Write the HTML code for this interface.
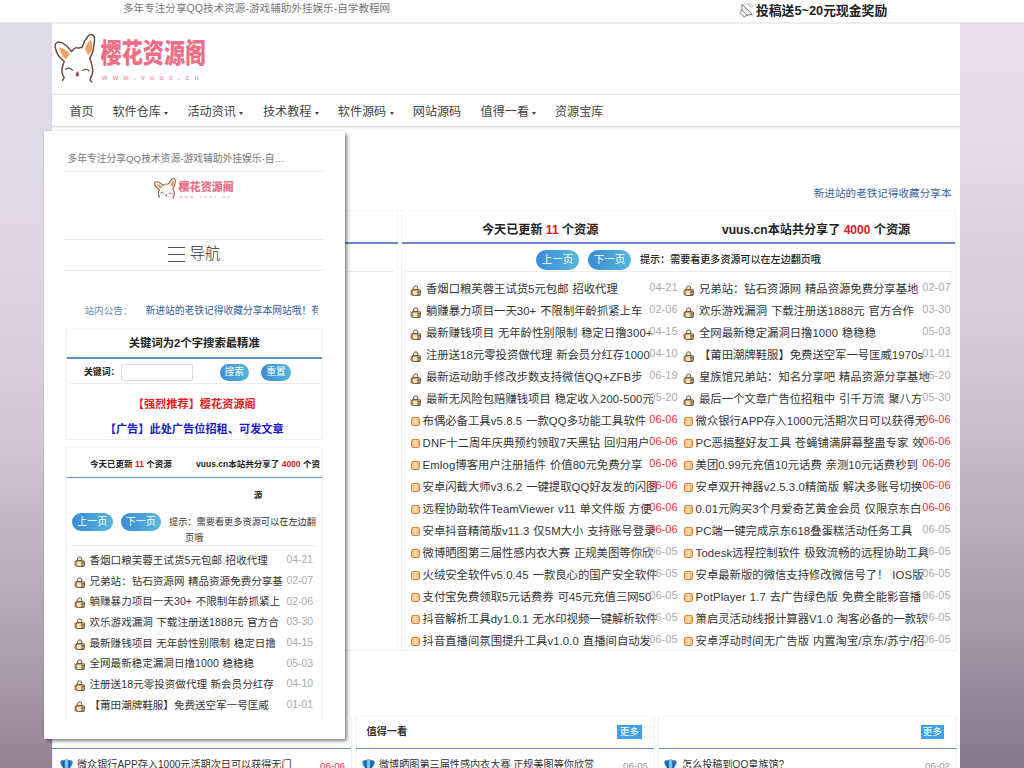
<!DOCTYPE html>
<html lang="zh-CN"><head><meta charset="utf-8"><title>樱花资源阁</title>
<style>
*{box-sizing:border-box;margin:0;padding:0}
html,body{width:1024px;height:768px;overflow:hidden}
body{position:relative;font-family:"Liberation Sans","Noto Sans CJK SC",sans-serif;color:#333;
background:linear-gradient(180deg,#dfdce9 0px,#e0dbe9 120px,#dfd6e5 250px,#dacedd 368px,#d0c3d2 450px,#c4b6c6 520px,#b8a9ba 600px,#a898aa 680px,#928294 768px)}
body:after{content:"";position:absolute;left:960px;top:23.5px;width:64px;height:745px;background:linear-gradient(180deg,#e9e0ec 0px,#e6dde9 97px,#ddd3de 207px,#d6cbd7 307px,#cabdcb 407px,#b9abbb 507px,#a597a8 607px,#95869a 677px,#86778b 745px)}
.abs,.r,.pr,.ln{position:absolute}
#top{position:absolute;left:0;top:0;width:1024px;height:23px;background:#fff;border-bottom:1px solid #ececec;z-index:5}
#top .l{position:absolute;left:123px;top:1px;font-size:10.6px;line-height:15px;color:#777;white-space:nowrap}
#top .rt{position:absolute;left:756px;top:2px;font-size:12.8px;line-height:18px;font-weight:bold;color:#222;white-space:nowrap}
#wrap{position:absolute;left:52px;top:23px;width:908px;height:745px;background:#fff;border-top:1px solid #eee}
#nav{position:absolute;left:52px;top:94px;width:908px;height:33px;border-top:1px solid #e6e6e6;border-bottom:1px solid #d8d8d8;box-shadow:0 1px 2px rgba(0,0,0,.08);background:#fff}
#nav span{position:absolute;top:10px;font-size:12.1px;line-height:15px;color:#444;white-space:nowrap}
#nav b{position:absolute;top:16.5px;width:0;height:0;border-left:2.5px solid transparent;border-right:2.5px solid transparent;border-top:3px solid #444}
.ln{height:1px;background:#ececec}
.blue{position:absolute;height:1.6px;background:#6c88c8}
.panel{position:absolute;background:#fff;border:1px solid #efefef;border-top-color:#f8f8f8}
.hd{position:absolute;font-size:12.1px;line-height:16px;font-weight:bold;color:#222;white-space:nowrap}
.hd em{font-style:normal;color:#e0191d}
.btn{position:absolute;border-radius:12px;background:linear-gradient(90deg,#3c8cd8,#55b6dc);color:#fff;text-align:center;white-space:nowrap}
.r{height:22px;white-space:nowrap;word-spacing:.7px;font-size:11.35px;line-height:22px;color:#343434}
.r .t{position:absolute;left:21px;top:0}
.r.o .t{left:17.6px}
.r .d{position:absolute;right:0.5px;top:-2px;font-size:11px;color:#aaa}
.d.red{color:#f0313a!important}
.la{letter-spacing:.12px}
.ic{position:absolute;display:block}
.r .th{left:5px;top:6.5px;width:11px;height:11px}
.r .og{left:6px;top:6.8px}
.og{width:8.6px;height:9px;border:1.3px solid #e0822f;border-radius:1.8px;background:linear-gradient(90deg,#f7bd80,#fddcb6 50%,#f6b371)}
#pop{position:absolute;left:44px;top:131px;width:300.5px;height:607.5px;background:#fff;box-shadow:2.5px 2.5px 3.5px rgba(0,0,0,.45),0 0 1px rgba(0,0,0,.35);z-index:10;overflow:hidden}
#pop .in{position:absolute;left:-44px;top:-131px;width:400px;height:900px}
.pr{left:66.5px;width:256px;height:20.5px;white-space:nowrap;word-spacing:.6px;font-size:10.56px;line-height:20.5px;color:#343434}
.pr .t{position:absolute;left:23px;top:0}
.pr .d{position:absolute;right:9.5px;top:0.3px;font-size:10.4px;color:#aaa}
.pr .th{left:7.5px;top:6px;width:11px;height:11px}
</style></head><body>
<svg width="0" height="0" style="position:absolute"><defs>
<g id="thumb">
<rect x="0.2" y="4.8" width="1.9" height="5.4" fill="#e6ad80"/>
<path d="M3.1 5 C3.6 4 3.3 2.9 3.8 1.9 C4.4 0.7 6.8 0.6 7.5 1.7 C8.1 2.7 7.5 3.9 7.9 5 Z" fill="#efe6d2" stroke="#54483a" stroke-width="0.95"/>
<path d="M2 4.9 H9.9 C10.9 4.9 10.9 6.2 10.1 6.35 C11 6.5 11 7.7 10.1 7.8 C10.9 7.95 10.8 9.1 10 9.25 C10.6 9.45 10.4 10.6 9.5 10.6 H4.2 L2 9.9 Z" fill="#f7e0b4" stroke="#4b3a20" stroke-width="0.9" stroke-linejoin="round"/>
<path d="M7.2 6.35 H10.1 M7.2 7.8 H10.1 M7.2 9.25 H9.9" stroke="#4b3a20" stroke-width="0.8"/>
</g>
<g id="gem">
<path d="M0.3 3.2 C0.3 1.5 2.2 0.6 3.6 1.6 C4.8 0 8.2 0 9.4 1.6 C10.8 0.6 12.7 1.5 12.7 3.2 C12.7 6.5 9.5 9.5 6.5 11.5 C3.5 9.5 0.3 6.5 0.3 3.2 Z" fill="#2a7cc4"/>
<path d="M5.2 1.2 C6 0.7 7 0.7 7.8 1.2 V10.5 L6.5 11.5 L5.2 10.5 Z" fill="#7fd0f2"/>
<path d="M3.6 1.6 C3 3.5 3 6 4.2 9.6 M9.4 1.6 C10 3.5 10 6 8.8 9.6" stroke="#174f8c" stroke-width="0.9" fill="none"/>
</g>
</defs></svg>

<div id="top">
 <div class="l">多年专注分享QQ技术资源-游戏辅助外挂娱乐-自学教程网</div>
 <svg class="abs" style="left:738px;top:2px" width="16" height="17" viewBox="0 0 16 17"><g fill="none" stroke="#777" stroke-width="1" stroke-linejoin="round" stroke-linecap="round"><path d="M4.3 2.5 L14.2 12.4 L9 13.2 L6.3 15 L2.2 10.8 L3.8 8 Z"/><path d="M3.8 8 L9 13.2"/><path d="M9.5 2.2 C11.2 2.4 12.6 3.6 13 5.4" stroke="#999"/><path d="M10.6 0.8 C12.6 1.2 14.2 2.8 14.6 4.8" stroke="#bbb" stroke-width="0.8"/></g></svg>
 <div class="rt">投稿送5~20元现金奖励</div>
</div>

<div id="wrap"></div>

<!-- logo -->
<svg class="abs" style="left:52px;top:30.6px" width="160" height="56" viewBox="0 0 160 56">
 <g stroke="#6e4c3e" stroke-width="1.5" stroke-linejoin="round" stroke-linecap="round">
  <path d="M10.6 49.2 C11.6 48 12.4 47 12.2 46 C10.8 45 10 42 10 38.5 C10 35.5 11.4 33 12.2 30.4 C8 27.5 4.2 21.5 3.1 16.2 C2.6 13 4.5 10.8 6.9 11.1 C9.5 11.3 12 12.6 13.5 14 C16 16.2 18 18.5 19.5 20.5 C20.8 19 22 17.4 23.5 16.9 C24.8 16.5 26 17.2 27.2 16.9 C28.4 16.6 29.2 16.4 30.1 16.2 C31.5 12 33.5 8 35.9 5.2 C37.2 3.8 39 3.2 40.3 3.8 C42 4.6 42.8 6.6 42.5 8.9 C42.2 13 41.8 16.5 41 19.8 C40.3 22.5 39.2 25.2 37.75 27.5 C38.8 29.8 39.6 32 39.9 34.4 C40.4 36.4 40.8 38.2 40.7 40.2 C40.6 42.4 40 44.2 39.2 46.1 C38.8 47.2 38.3 48 38 49 C38.6 49.8 39.2 50.4 39.9 50.8" fill="#fff"/>
 </g>
 <path d="M7.3 16.3 C11 17.2 15.5 20 18.2 23.4 C16.4 24.8 14.8 26.6 13.8 28.6 C10.5 25.5 7.8 21 7.3 16.3 Z" fill="#f0a060"/>
 <path d="M38.6 8.8 C40.2 11 40.6 14.5 40.3 17.6 C39.6 20.2 37.8 22.6 36 24.3 C35 22 33.8 19.6 33 17.6 C34.2 14 36.2 10.8 38.6 8.8 Z" fill="#f0a060"/>
 <path d="M13.7 38.4 C15 36.6 18.6 36.4 20.6 39.2 M30.5 39.7 C32.2 37.9 35.6 37.9 37 39.9" fill="none" stroke="#6e4a3c" stroke-width="1.2" stroke-linecap="round"/>
 <path d="M25.35 40.4 C26.6 41.6 27.2 43.4 26.6 44.8 C26.2 45.8 24.5 45.8 24.1 44.8 C23.5 43.4 24.1 41.6 25.35 40.4 Z" fill="#8a3a4c" stroke="#e58a9a" stroke-width="0.7" stroke-linejoin="round"/>
 <text x="0" y="0" transform="translate(48.6,32.2) scale(0.76,0.97)" font-family='Liberation Sans,Noto Sans CJK SC,sans-serif' font-weight="900" font-size="27.8" fill="#ef6d86">樱花资源阁</text>
 <text x="50" y="49.4" font-family='Liberation Sans,Noto Sans CJK SC,sans-serif' font-weight="bold" font-size="6.8" letter-spacing="5.35" fill="#f3a0ae">www.vuus.cn</text>
</svg>

<div id="nav">
 <span style="left:17.4px">首页</span>
 <span style="left:60.5px">软件仓库</span><b style="left:112px"></b>
 <span style="left:135.5px">活动资讯</span><b style="left:187px"></b>
 <span style="left:211px">技术教程</span><b style="left:262.5px"></b>
 <span style="left:285.8px">软件源码</span><b style="left:337.5px"></b>
 <span style="left:360.8px">网站源码</span>
 <span style="left:428.6px">值得一看</span><b style="left:480px"></b>
 <span style="left:503px">资源宝库</span>
</div>

<div class="abs" style="left:600px;top:185px;width:351.5px;text-align:right;font-size:10.6px;line-height:16px;color:#3c5f9f;white-space:nowrap">新进站的老铁记得收藏分享本</div>

<!-- left main panel (mostly hidden) -->
<div class="panel" style="left:52px;top:210px;width:346px;height:441px;border-right-color:#f7f7f7"></div>
<div class="blue" style="left:52px;top:242.4px;width:345.5px"></div>
<div class="ln" style="left:56px;top:271px;width:338px"></div>

<!-- right main panel -->
<div class="panel" style="left:401px;top:210px;width:554.5px;height:441px"></div>
<div class="hd" style="left:482px;top:222px">今天已更新 <em>11</em> 个资源</div>
<div class="hd" style="left:722px;top:222px">vuus.cn本站共分享了 <em>4000</em> 个资源</div>
<div class="blue" style="left:402px;top:242.4px;width:553px"></div>
<div class="btn" style="left:536px;top:250px;width:43px;height:20px;font-size:10.5px;line-height:19.5px">上一页</div>
<div class="btn" style="left:588px;top:250px;width:43px;height:20px;font-size:10.5px;line-height:19.5px">下一页</div>
<div class="abs" style="left:640px;top:252px;font-size:10.05px;line-height:16px;color:#222;font-weight:500;white-space:nowrap">提示：需要看更多资源可以在左边翻页哦</div>
<div class="ln" style="left:406px;top:271px;width:545px"></div>
<div class="ln" style="left:405px;top:271px;width:1px;height:378px;background:#fafafa"></div>
<div class="ln" style="left:951px;top:271px;width:1px;height:378px;background:#fafafa"></div>
<div class="r" style="left:405px;top:278px;width:273px"><svg class="ic th" viewBox="0 0 11 11"><use href="#thumb"/></svg><span class="t">香烟口粮芙蓉王试货<span class="la">5</span>元包邮 招收代理</span><span class="d">04-21</span></div>
<div class="r" style="left:405px;top:300px;width:273px"><svg class="ic th" viewBox="0 0 11 11"><use href="#thumb"/></svg><span class="t">躺赚暴力项目一天<span class="la">30+</span> 不限制年龄抓紧上车</span><span class="d">02-06</span></div>
<div class="r" style="left:405px;top:322px;width:273px"><svg class="ic th" viewBox="0 0 11 11"><use href="#thumb"/></svg><span class="t">最新赚钱项目 无年龄性别限制 稳定日撸<span class="la">300+</span></span><span class="d">04-15</span></div>
<div class="r" style="left:405px;top:344px;width:273px"><svg class="ic th" viewBox="0 0 11 11"><use href="#thumb"/></svg><span class="t">注册送<span class="la">18</span>元零投资做代理 新会员分红存<span class="la">1000</span></span><span class="d">04-10</span></div>
<div class="r" style="left:405px;top:366px;width:273px"><svg class="ic th" viewBox="0 0 11 11"><use href="#thumb"/></svg><span class="t">最新运动助手修改步数支持微信<span class="la">QQ+ZFB</span>步</span><span class="d">06-19</span></div>
<div class="r" style="left:405px;top:388px;width:273px"><svg class="ic th" viewBox="0 0 11 11"><use href="#thumb"/></svg><span class="t">最新无风险包赔赚钱项目 稳定收入<span class="la">200-500</span>元</span><span class="d">05-20</span></div>
<div class="r o" style="left:405px;top:410px;width:273px"><i class="ic og"></i><span class="t">布偶必备工具<span class="la">v5.8.5</span> 一款<span class="la">QQ</span>多功能工具软件</span><span class="d red">06-06</span></div>
<div class="r o" style="left:405px;top:432px;width:273px"><i class="ic og"></i><span class="t"><span class="la">DNF</span>十二周年庆典预约领取<span class="la">7</span>天黑钻 回归用户</span><span class="d red">06-06</span></div>
<div class="r o" style="left:405px;top:454px;width:273px"><i class="ic og"></i><span class="t"><span class="la">Emlog</span>博客用户注册插件 价值<span class="la">80</span>元免费分享</span><span class="d red">06-06</span></div>
<div class="r o" style="left:405px;top:476px;width:273px"><i class="ic og"></i><span class="t">安卓闪截大师<span class="la">v3.6.2</span> 一键提取<span class="la">QQ</span>好友发的闪图</span><span class="d red">06-06</span></div>
<div class="r o" style="left:405px;top:498px;width:273px"><i class="ic og"></i><span class="t">远程协助软件<span class="la">TeamViewer</span> <span class="la">v11</span> 单文件版 方便</span><span class="d red">06-06</span></div>
<div class="r o" style="left:405px;top:520px;width:273px"><i class="ic og"></i><span class="t">安卓抖音精简版<span class="la">v11.3</span> 仅<span class="la">5M</span>大小 支持账号登录</span><span class="d red">06-06</span></div>
<div class="r o" style="left:405px;top:542px;width:273px"><i class="ic og"></i><span class="t">微博晒图第三届性感内衣大赛 正规美图等你欣</span><span class="d">06-05</span></div>
<div class="r o" style="left:405px;top:564px;width:273px"><i class="ic og"></i><span class="t">火绒安全软件<span class="la">v5.0.45</span> 一款良心的国产安全软件</span><span class="d">06-05</span></div>
<div class="r o" style="left:405px;top:586px;width:273px"><i class="ic og"></i><span class="t">支付宝免费领取<span class="la">5</span>元话费券 可<span class="la">45</span>元充值三网<span class="la">50</span></span><span class="d">06-05</span></div>
<div class="r o" style="left:405px;top:608px;width:273px"><i class="ic og"></i><span class="t">抖音解析工具<span class="la">dy1.0.1</span> 无水印视频一键解析软件</span><span class="d">06-05</span></div>
<div class="r o" style="left:405px;top:630px;width:273px"><i class="ic og"></i><span class="t">抖音直播间氛围提升工具<span class="la">v1.0.0</span> 直播间自动发</span><span class="d">06-05</span></div>
<div class="r" style="left:678px;top:278px;width:273px"><svg class="ic th" viewBox="0 0 11 11"><use href="#thumb"/></svg><span class="t">兄弟站：钻石资源网 精品资源免费分享基地</span><span class="d">02-07</span></div>
<div class="r" style="left:678px;top:300px;width:273px"><svg class="ic th" viewBox="0 0 11 11"><use href="#thumb"/></svg><span class="t">欢乐游戏漏洞 下载注册送<span class="la">1888</span>元 官方合作</span><span class="d">03-30</span></div>
<div class="r" style="left:678px;top:322px;width:273px"><svg class="ic th" viewBox="0 0 11 11"><use href="#thumb"/></svg><span class="t">全网最新稳定漏洞日撸<span class="la">1000</span> 稳稳稳</span><span class="d">05-03</span></div>
<div class="r" style="left:678px;top:344px;width:273px"><svg class="ic th" viewBox="0 0 11 11"><use href="#thumb"/></svg><span class="t">【莆田潮牌鞋服】免费送空军一号匡威<span class="la">1970s</span></span><span class="d">01-01</span></div>
<div class="r" style="left:678px;top:366px;width:273px"><svg class="ic th" viewBox="0 0 11 11"><use href="#thumb"/></svg><span class="t">皇族馆兄弟站：知名分享吧 精品资源分享基地</span><span class="d">05-20</span></div>
<div class="r" style="left:678px;top:388px;width:273px"><svg class="ic th" viewBox="0 0 11 11"><use href="#thumb"/></svg><span class="t">最后一个文章广告位招租中 引千万流 聚八方</span><span class="d">05-30</span></div>
<div class="r o" style="left:678px;top:410px;width:273px"><i class="ic og"></i><span class="t">微众银行<span class="la">APP</span>存入<span class="la">1000</span>元活期次日可以获得无</span><span class="d red">06-06</span></div>
<div class="r o" style="left:678px;top:432px;width:273px"><i class="ic og"></i><span class="t"><span class="la">PC</span>恶搞整好友工具 苍蝇铺满屏幕整蛊专家 效</span><span class="d red">06-06</span></div>
<div class="r o" style="left:678px;top:454px;width:273px"><i class="ic og"></i><span class="t">美团<span class="la">0.99</span>元充值<span class="la">10</span>元话费 亲测<span class="la">10</span>元话费秒到</span><span class="d red">06-06</span></div>
<div class="r o" style="left:678px;top:476px;width:273px"><i class="ic og"></i><span class="t">安卓双开神器<span class="la">v2.5.3.0</span>精简版 解决多账号切换</span><span class="d red">06-06</span></div>
<div class="r o" style="left:678px;top:498px;width:273px"><i class="ic og"></i><span class="t"><span class="la">0.01</span>元购买<span class="la">3</span>个月爱奇艺黄金会员 仅限京东白</span><span class="d red">06-06</span></div>
<div class="r o" style="left:678px;top:520px;width:273px"><i class="ic og"></i><span class="t"><span class="la">PC</span>端一键完成京东<span class="la">618</span>叠蛋糕活动任务工具</span><span class="d">06-05</span></div>
<div class="r o" style="left:678px;top:542px;width:273px"><i class="ic og"></i><span class="t"><span class="la">Todesk</span>远程控制软件 极致流畅的远程协助工具</span><span class="d">06-05</span></div>
<div class="r o" style="left:678px;top:564px;width:273px"><i class="ic og"></i><span class="t">安卓最新版的微信支持修改微信号了！ <span class="la">IOS</span>版</span><span class="d">06-05</span></div>
<div class="r o" style="left:678px;top:586px;width:273px"><i class="ic og"></i><span class="t"><span class="la">PotPlayer</span> <span class="la">1.7</span> 去广告绿色版 免费全能影音播</span><span class="d">06-05</span></div>
<div class="r o" style="left:678px;top:608px;width:273px"><i class="ic og"></i><span class="t">箫启灵活动线报计算器<span class="la">V1.0</span> 淘客必备的一款软</span><span class="d">06-05</span></div>
<div class="r o" style="left:678px;top:630px;width:273px"><i class="ic og"></i><span class="t">安卓浮动时间无广告版 内置淘宝/京东/苏宁/招</span><span class="d">06-05</span></div>

<!-- bottom panels -->
<div class="panel" style="left:52px;top:716px;width:299.5px;height:60px"></div>
<div class="blue" style="left:52px;top:747.8px;width:299px"></div>
<div class="abs" style="left:60.2px;top:756.6px;width:13px;height:12px"><svg width="13" height="12" viewBox="0 0 13 12"><use href="#gem"/></svg></div>
<div class="abs" style="left:77px;top:756.6px;font-size:10.12px;line-height:16px;color:#333;white-space:nowrap">微众银行APP存入1000元活期次日可以获得无门</div>
<div class="abs" style="left:320px;top:757.5px;font-size:9.8px;line-height:16px;color:#f0313a;white-space:nowrap">06-06</div>

<div class="panel" style="left:355.5px;top:716px;width:299px;height:60px"></div>
<div class="abs" style="left:366.5px;top:724px;font-size:10.2px;line-height:16px;font-weight:bold;color:#333">值得一看</div>
<div class="abs" style="left:616.5px;top:725px;width:25.5px;height:13.5px;background:#3fa2e4;color:#fff;font-size:9.6px;line-height:13px;text-align:center">更多</div>
<div class="blue" style="left:356px;top:747.8px;width:298px"></div>
<div class="abs" style="left:361.5px;top:756.6px;width:13px;height:12px"><svg width="13" height="12" viewBox="0 0 13 12"><use href="#gem"/></svg></div>
<div class="abs" style="left:379px;top:756.6px;font-size:10.12px;line-height:16px;color:#333;white-space:nowrap">微博晒图第三届性感内衣大赛 正规美图等你欣赏</div>
<div class="abs" style="left:623px;top:757.5px;font-size:9.8px;line-height:16px;color:#999;white-space:nowrap">06-05</div>

<div class="panel" style="left:658px;top:716px;width:299px;height:60px"></div>
<div class="abs" style="left:920.5px;top:725px;width:23.5px;height:13.5px;background:#3fa2e4;color:#fff;font-size:9.6px;line-height:13px;text-align:center">更多</div>
<div class="blue" style="left:658.5px;top:747.8px;width:298px"></div>
<div class="abs" style="left:664px;top:756.6px;width:13px;height:12px"><svg width="13" height="12" viewBox="0 0 13 12"><use href="#gem"/></svg></div>
<div class="abs" style="left:682px;top:756.6px;font-size:10.12px;line-height:16px;color:#333;white-space:nowrap">怎么投稿到QQ皇族馆?</div>
<div class="abs" style="left:925px;top:757.5px;font-size:9.8px;line-height:16px;color:#999;white-space:nowrap">06-02</div>

<!-- popup -->
<div id="pop"><div class="in">
 <div class="abs" style="left:67.5px;top:151px;font-size:9.75px;line-height:16px;color:#777;white-space:nowrap">多年专注分享QQ技术资源-游戏辅助外挂娱乐-自…</div>
 <div class="ln" style="left:63.5px;top:171px;width:261.5px"></div>
 <svg class="abs" style="left:152.9px;top:177.4px" width="84" height="23.6" viewBox="0 0 160 56" preserveAspectRatio="none">
  <path d="M10.6 49.2 C11.6 48 12.4 47 12.2 46 C10.8 45 10 42 10 38.5 C10 35.5 11.4 33 12.2 30.4 C8 27.5 4.2 21.5 3.1 16.2 C2.6 13 4.5 10.8 6.9 11.1 C9.5 11.3 12 12.6 13.5 14 C16 16.2 18 18.5 19.5 20.5 C20.8 19 22 17.4 23.5 16.9 C24.8 16.5 26 17.2 27.2 16.9 C28.4 16.6 29.2 16.4 30.1 16.2 C31.5 12 33.5 8 35.9 5.2 C37.2 3.8 39 3.2 40.3 3.8 C42 4.6 42.8 6.6 42.5 8.9 C42.2 13 41.8 16.5 41 19.8 C40.3 22.5 39.2 25.2 37.75 27.5 C38.8 29.8 39.6 32 39.9 34.4 C40.4 36.4 40.8 38.2 40.7 40.2 C40.6 42.4 40 44.2 39.2 46.1 C38.8 47.2 38.3 48 38 49 C38.6 49.8 39.2 50.4 39.9 50.8" fill="#fff" stroke="#8a6048" stroke-width="2.2"/>
  <path d="M7.3 16.3 C11 17.2 15.5 20 18.2 23.4 C16.4 24.8 14.8 26.6 13.8 28.6 C10.5 25.5 7.8 21 7.3 16.3 Z" fill="#f0a060"/>
  <path d="M38.6 8.8 C40.2 11 40.6 14.5 40.3 17.6 C39.6 20.2 37.8 22.6 36 24.3 C35 22 33.8 19.6 33 17.6 C34.2 14 36.2 10.8 38.6 8.8 Z" fill="#f0a060"/>
  <path d="M13.7 38.4 C15 36.6 18.6 36.4 20.6 39.2 M30.5 39.7 C32.2 37.9 35.6 37.9 37 39.9" fill="none" stroke="#6e4a3c" stroke-width="1.6"/>
  <path d="M25.35 40.4 C26.6 41.6 27.2 43.4 26.6 44.8 C26.2 45.8 24.5 45.8 24.1 44.8 C23.5 43.4 24.1 41.6 25.35 40.4 Z" fill="#a8485a"/>
  <text x="0" y="0" transform="translate(48.6,32.8) scale(0.76,0.97)" font-family='Liberation Sans,Noto Sans CJK SC,sans-serif' font-weight="900" font-size="27.8" fill="#ef6d86">樱花资源阁</text>
  <text x="50" y="50" font-family='Liberation Sans,Noto Sans CJK SC,sans-serif' font-weight="bold" font-size="6.8" letter-spacing="5.35" fill="#f3a0ae">www.vuus.cn</text>
 </svg>
 <div class="ln" style="left:63.5px;top:239px;width:261.5px"></div>
 <div class="abs" style="left:168px;top:246.5px;width:17px;height:1px;background:#555"></div>
 <div class="abs" style="left:168px;top:253.5px;width:17px;height:1px;background:#555"></div>
 <div class="abs" style="left:168px;top:260.5px;width:17px;height:1px;background:#555"></div>
 <div class="abs" style="left:189.5px;top:243px;font-size:15.4px;line-height:22px;font-weight:300;color:#333;white-space:nowrap">导航</div>
 <div class="ln" style="left:63.5px;top:269.5px;width:261.5px"></div>

 <div class="abs" style="left:84.5px;top:303px;font-size:9.6px;line-height:16px;color:#5b8db8;white-space:nowrap">站内公告：</div>
 <div class="abs" style="left:145.5px;top:303px;width:172.4px;overflow:hidden;font-size:9.75px;line-height:16px;color:#2f5da2;white-space:nowrap">新进站的老铁记得收藏分享本网站哦！有</div>

 <div class="panel" style="left:66px;top:327.5px;width:256.5px;height:112px"></div>
 <div class="abs" style="left:66px;top:335px;width:256.5px;text-align:center;font-size:11.35px;line-height:16px;font-weight:bold;color:#222;white-space:nowrap">关键词为2个字搜索最精准</div>
 <div class="blue" style="left:66.5px;top:357px;width:255.5px;background:#5b93c8"></div>
 <div class="abs" style="left:84px;top:365px;font-size:8.9px;line-height:15px;font-weight:bold;color:#222;white-space:nowrap">关键词：</div>
 <div class="abs" style="left:120.5px;top:364px;width:72px;height:17px;border:1px solid #ddd;border-radius:2px;background:#fff"></div>
 <div class="btn" style="left:219.5px;top:364px;width:29.5px;height:17px;font-size:9.7px;line-height:16.5px">搜索</div>
 <div class="btn" style="left:261px;top:364px;width:30px;height:17px;font-size:9.7px;line-height:16.5px">重置</div>
 <div class="ln" style="left:70px;top:383px;width:249px"></div>
 <div class="abs" style="left:66px;top:396px;width:256.5px;text-align:center;font-size:11.2px;line-height:16px;font-weight:bold;color:#e5191c;white-space:nowrap">【强烈推荐】樱花资源阁</div>
 <div class="abs" style="left:66px;top:421px;width:256.5px;text-align:center;font-size:11.2px;line-height:16px;font-weight:bold;color:#1c18d0;white-space:nowrap">【广告】此处广告位招租、可发文章</div>

 <div class="panel" style="left:66px;top:447px;width:256.5px;height:272.5px;border-bottom:0"></div>
 <div class="hd" style="left:90px;top:456.5px;font-size:8.52px;line-height:15px">今天已更新 <em>11</em> 个资源</div>
 <div class="hd" style="left:196px;top:456.5px;font-size:8.52px;line-height:15px;width:126px;overflow:hidden">vuus.cn本站共分享了 <em>4000</em> 个资</div>
 <div class="blue" style="left:66.5px;top:476.5px;width:255.5px;background:#5b93c8"></div>
 <div class="hd" style="left:253.8px;top:488px;font-size:8.52px;line-height:15px">源</div>
 <div class="btn" style="left:72px;top:513px;width:40.5px;height:17.5px;font-size:10px;line-height:17px">上一页</div>
 <div class="btn" style="left:120.5px;top:513px;width:40.5px;height:17.5px;font-size:10px;line-height:17px">下一页</div>
 <div class="abs" style="left:169px;top:513.5px;font-size:9.2px;line-height:16px;color:#333;white-space:nowrap">提示：需要看更多资源可以在左边翻</div>
 <div class="abs" style="left:66px;top:530px;width:256.5px;text-align:center;font-size:9.2px;line-height:16px;color:#333;white-space:nowrap">页哦</div>
 <div class="ln" style="left:71px;top:544.5px;width:247px"></div>
 <div class="abs" style="left:0;top:0;width:400px;height:719.6px;overflow:hidden">
<div class="pr" style="top:550.10px"><svg class="ic th" viewBox="0 0 11 11"><use href="#thumb"/></svg><span class="t">香烟口粮芙蓉王试货<span class="la">5</span>元包邮 招收代理</span><span class="d">04-21</span></div>
<div class="pr" style="top:570.73px"><svg class="ic th" viewBox="0 0 11 11"><use href="#thumb"/></svg><span class="t">兄弟站：钻石资源网 精品资源免费分享基</span><span class="d">02-07</span></div>
<div class="pr" style="top:591.36px"><svg class="ic th" viewBox="0 0 11 11"><use href="#thumb"/></svg><span class="t">躺赚暴力项目一天<span class="la">30+</span> 不限制年龄抓紧上</span><span class="d">02-06</span></div>
<div class="pr" style="top:611.99px"><svg class="ic th" viewBox="0 0 11 11"><use href="#thumb"/></svg><span class="t">欢乐游戏漏洞 下载注册送<span class="la">1888</span>元 官方合</span><span class="d">03-30</span></div>
<div class="pr" style="top:632.62px"><svg class="ic th" viewBox="0 0 11 11"><use href="#thumb"/></svg><span class="t">最新赚钱项目 无年龄性别限制 稳定日撸</span><span class="d">04-15</span></div>
<div class="pr" style="top:653.25px"><svg class="ic th" viewBox="0 0 11 11"><use href="#thumb"/></svg><span class="t">全网最新稳定漏洞日撸<span class="la">1000</span> 稳稳稳</span><span class="d">05-03</span></div>
<div class="pr" style="top:673.88px"><svg class="ic th" viewBox="0 0 11 11"><use href="#thumb"/></svg><span class="t">注册送<span class="la">18</span>元零投资做代理 新会员分红存</span><span class="d">04-10</span></div>
<div class="pr" style="top:694.51px"><svg class="ic th" viewBox="0 0 11 11"><use href="#thumb"/></svg><span class="t">【莆田潮牌鞋服】免费送空军一号匡威</span><span class="d">01-01</span></div>
<div class="pr" style="top:715.14px"><svg class="ic th" viewBox="0 0 11 11"><use href="#thumb"/></svg><span class="t">皇族馆兄弟站：知名分享吧 精品资源分</span><span class="d">05-20</span></div>
 </div>
</div></div>
</body></html>
